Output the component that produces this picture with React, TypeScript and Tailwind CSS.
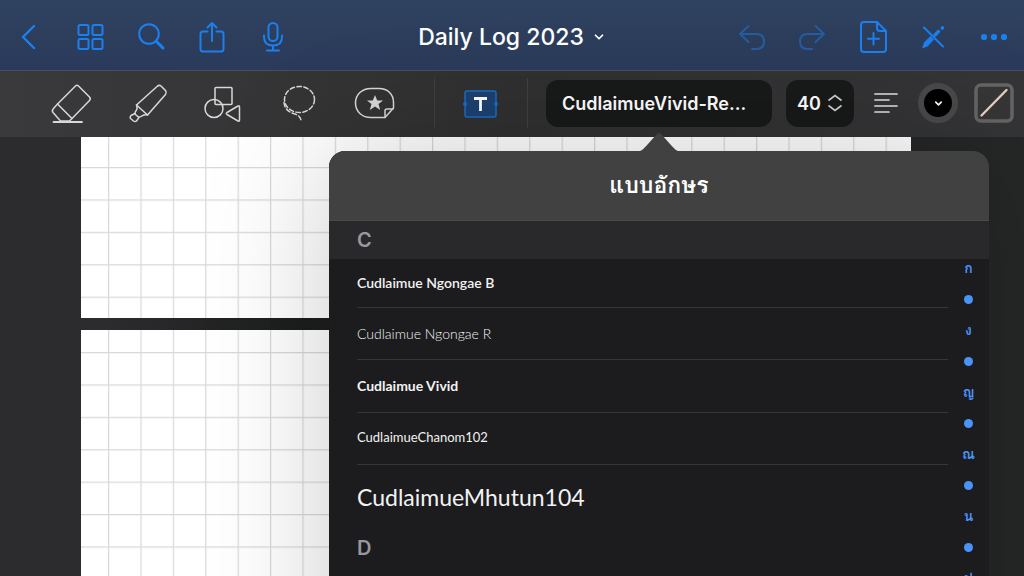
import React, { useState } from "react";
import { FiChevronDown } from "react-icons/fi";

interface IFontItem {
  id: number;
  name: string;
  className: string;
}

const fontList: IFontItem[] = [
  { id: 1, name: "Cudlaimue Ngongae B", className: "h-12 text-[14px] font-semibold" },
  { id: 2, name: "Cudlaimue Ngongae R", className: "h-[51px] text-[14px] font-light" },
  { id: 3, name: "Cudlaimue Vivid", className: "h-[52px] text-[14px] font-bold" },
  { id: 4, name: "CudlaimueChanom102", className: "h-[51px] text-[13px] font-normal" },
  { id: 5, name: "CudlaimueMhutun104", className: "h-[65px] text-[23px] font-normal" },
];

const indexList = ["ก", "•", "ง", "•", "ญ", "•", "ณ", "•", "น", "•", "ป"];

function HeaderButton({
  label,
  disabled,
  children,
}: {
  label: string;
  disabled?: boolean;
  children: React.ReactNode;
}) {
  return (
    <button
      aria-label={label}
      disabled={disabled}
      className="flex h-12 w-12 items-center justify-center text-[#1b80ee] disabled:text-[#255d9f]"
    >
      <svg
        width="32"
        height="34"
        viewBox="0 0 32 34"
        fill="none"
        stroke="currentColor"
        strokeWidth="2"
        strokeLinecap="round"
        strokeLinejoin="round"
      >
        {children}
      </svg>
    </button>
  );
}

function ToolButton({ label, children }: { label: string; children: React.ReactNode }) {
  return (
    <button aria-label={label} className="flex h-12 w-10 items-center justify-center text-[#d8d8d8]">
      <svg
        width="42"
        height="42"
        viewBox="0 0 42 42"
        fill="none"
        stroke="currentColor"
        strokeWidth="1.5"
        strokeLinecap="round"
        strokeLinejoin="round"
        className="shrink-0"
      >
        {children}
      </svg>
    </button>
  );
}

function Paper({ id, offsetY, className }: { id: string; offsetY: number; className: string }) {
  return (
    <div className={`bg-white ${className}`}>
      <svg width="100%" height="100%" className="block">
        <defs>
          <pattern id={id} x="27" y={offsetY} width="32.4" height="32.4" patternUnits="userSpaceOnUse">
            <path d="M0.6 0V32.4M0 0.6H32.4" stroke="#000" strokeOpacity="0.15" strokeWidth="1.2" />
          </pattern>
        </defs>
        <rect width="100%" height="100%" fill={`url(#${id})`} />
      </svg>
    </div>
  );
}

function FontPopover({ selected, onSelect }: { selected: number; onSelect: (id: number) => void }) {
  return (
    <div className="absolute top-[52px] left-1/2 z-10 w-[660px] -translate-x-1/2">
      <svg width="38" height="19" viewBox="0 0 38 19" className="mx-auto block">
        <path d="M0 19C3 18 5 15 8 12L16 3Q19 -1 22 3L30 12C33 15 35 18 38 19Z" fill="#414141" />
      </svg>
      <div className="h-screen overflow-hidden rounded-2xl bg-[#1c1c1e] shadow-[0_0_130px_rgba(0,0,0,0.2)]">
        <h2 className="flex h-[70px] items-center justify-center border-b border-[#4a4a4c] bg-[#414141] font-[Loma,'Noto_Sans_Thai',sans-serif] text-[23px] font-semibold text-white">
          แบบอักษร
        </h2>
        <h3 className="flex h-[38px] items-center bg-[#29292b] pl-7 text-[20px] font-semibold text-[#98989d]">
          C
        </h3>
        <div className="flex">
          <div className="flex-1 pl-7">
            <ul>
              {fontList.map((font) => (
                <li key={font.id} className="border-b border-[#363639] last:border-b-0">
                  <button
                    aria-pressed={font.id === selected}
                    onClick={() => onSelect(font.id)}
                    className={`flex w-full items-center font-[Lato,sans-serif] text-[#f2f2f2] ${font.className}`}
                  >
                    {font.name}
                  </button>
                </li>
              ))}
            </ul>
            <h3 className="flex h-9 items-center text-[20px] font-semibold text-[#98989d]">D</h3>
          </div>
          <nav
            className="-mt-1.5 flex w-[41px] flex-col items-center font-[Loma,'Noto_Sans_Thai',sans-serif]"
            aria-label="ดัชนี"
          >
            {indexList.map((letter, i) => (
              <a
                key={i}
                href="#"
                className="flex h-[31px] items-center justify-center text-[14px] font-semibold text-[#4a93f8]"
              >
                {letter === "•" ? <span className="h-[9px] w-[9px] rounded-full bg-[#4a93f8]" /> : letter}
              </a>
            ))}
          </nav>
        </div>
      </div>
    </div>
  );
}

export default function App() {
  const [selected, setSelected] = useState(3);

  return (
    <div className="flex h-screen flex-col overflow-hidden bg-[#2c2c2e] font-[Inter,'Noto_Sans_Thai',sans-serif]">
      <header className="flex h-[70px] items-center bg-linear-to-b from-[#2f435f] to-[#2b3a5b] px-[5px] pt-1">
        <div className="flex gap-[13px]">
          <HeaderButton label="Back">
            <path d="M21 6L10 17L21 28" strokeWidth="2.4" />
          </HeaderButton>
          <HeaderButton label="Pages">
            <rect x="4.5" y="5" width="10" height="10" rx="1.5" />
            <rect x="18.5" y="5" width="10" height="10" rx="1.5" />
            <rect x="4.5" y="19" width="10" height="10" rx="1.5" />
            <rect x="18.5" y="19" width="10" height="10" rx="1.5" />
          </HeaderButton>
          <HeaderButton label="Search">
            <circle cx="14" cy="14" r="9.8" />
            <path d="M21.5 21.5L28 28" strokeWidth="3" />
          </HeaderButton>
          <HeaderButton label="Share">
            <path d="M11.5 11.5H7Q4.5 11.5 4.5 14V29Q4.5 31.5 7 31.5H25Q27.5 31.5 27.5 29V14Q27.5 11.5 25 11.5H20.5" />
            <path d="M16 21V3M11.5 7.5L16 3L20.5 7.5" />
          </HeaderButton>
          <HeaderButton label="Record">
            <rect x="11.5" y="3" width="9" height="18" rx="4.5" />
            <path d="M7 15.5V17Q7 25.5 16 25.5Q25 25.5 25 17V15.5M16 25.5V30M10 30.5H22" />
          </HeaderButton>
        </div>
        <button className="flex flex-1 items-center justify-center gap-2 text-[23px] font-medium text-white">
          Daily Log 2023
          <FiChevronDown size={14} strokeWidth={3} />
        </button>
        <div className="flex gap-[13px]">
          <HeaderButton label="Undo" disabled>
            <path d="M13.5 6L5 14L13.5 22M5 14H21.5Q29 14 29 21.5Q29 29 21.5 29H17" />
          </HeaderButton>
          <HeaderButton label="Redo" disabled>
            <path d="M19.5 6L28 14L19.5 22M28 14H11.5Q4 14 4 21.5Q4 29 11.5 29H16" />
          </HeaderButton>
          <HeaderButton label="Add page">
            <path d="M7 2H20L29 11V29Q29 32 26 32H7Q4 32 4 29V5Q4 2 7 2ZM20 2V8Q20 11 23 11H29M16.5 13V24.5M11 18.7H22" />
          </HeaderButton>
          <HeaderButton label="Read only">
            <path d="M6 7.5L25 26.5" />
            <path d="M4 28.5L6 22.5L12.5 16L16 19.5L9.5 26.5Z" fill="currentColor" stroke="none" />
            <path d="M17 15L20.5 11.5M24.3 8L24.5 7.8" strokeWidth="3.4" />
          </HeaderButton>
          <HeaderButton label="More">
            <path d="M5 17H5.01M15 17H15.01M25 17H25.01" strokeWidth="6.2" />
          </HeaderButton>
        </div>
      </header>

      <div className="flex h-[67px] shrink-0 items-center border-t border-[#475063] bg-linear-to-r from-[#3a3a3c] via-[#303031] to-[#353537] pr-[10px] pb-0.5 pl-[51px]">
        <div className="flex gap-9">
          <ToolButton label="Eraser">
            <path d="M25.5 4Q27 2.5 28.500 4L39.5 15Q41 16.5 39.5 18.5L22 36.5L7.5 22Z" />
            <path d="M7.5 22L3.5 26.5Q1.5 28.5 3 30.5L10.5 39H19.5L22 36.5" />
            <path d="M3.5 40H32" strokeWidth="1.8" />
          </ToolButton>
          <ToolButton label="Highlighter">
            <path d="M31 4.5Q33 2.5 35 4L39.5 8.500Q41 10.5 39.5 12.5L21.5 33L10.5 23Z" />
            <path d="M10.5 23Q12 27 9.500 29.5Q8.5 31 9.500 32.5L12 34.8Q13.500 35.500 15 34.500Q18 32 21.5 33" />
            <path d="M9 31.500L5 33.5Q3.500 35 4.500 36.5L7.5 39Q9 40 10.5 39L13 35.3" />
          </ToolButton>
          <ToolButton label="Shapes">
            <rect x="13" y="5.5" width="17" height="17" rx="1" />
            <circle cx="12" cy="26.5" r="9" />
            <path d="M36 24Q37.5 23 37.5 25V38Q37.5 40 36 39L25 32.5Q23.5 31.5 25 30.5Z" />
          </ToolButton>
          <ToolButton label="Lasso">
            <g strokeDasharray="4.5 2.5">
              <ellipse cx="21.5" cy="17.5" rx="15" ry="13" />
              <path d="M6 20.5Q7 29.5 17 32Q22.5 34 23 38.5" />
            </g>
          </ToolButton>
          <ToolButton label="Stickers">
            <path d="M17 6.5H25C34 6.5 39.5 12.5 39.5 20.5V26L31 35.5H17C8 35.5 1.5 29.5 1.5 21C1.5 12.5 8 6.5 17 6.5Z" />
            <path d="M31 35.5V29Q31 27 33 27H39" />
            <path
              d="M21 13L23.2 18.5H29L24.5 22.1L26.2 28L21 24.5L15.8 28L17.5 22.1L13 18.5H18.8Z"
              fill="currentColor"
              stroke="none"
            />
          </ToolButton>
        </div>

        <div className="ml-auto flex items-center gap-7">
          <span className="h-[50px] w-px bg-[#414143]" />
          <button aria-label="Text" className="flex w-9 justify-center">
            <svg width="36" height="34" viewBox="0 0 36 34" className="shrink-0">
              <rect x="2" y="5" width="31" height="26" rx="2" fill="#1d4170" stroke="#1b6cc4" strokeWidth="1.5" />
              <circle cx="2" cy="18" r="2" fill="#1b6cc4" />
              <circle cx="33" cy="18" r="2" fill="#1b6cc4" />
              <path d="M11 12.5H24M17.5 12.5V25" fill="none" stroke="#fff" strokeWidth="2.8" />
            </svg>
          </button>
          <span className="h-[50px] w-px bg-[#414143]" />
        </div>

        <div className="ml-[18px] flex gap-3.5">
          <div className="relative">
            <button className="h-[47px] w-[226px] rounded-xl bg-[#181919] pr-6 pl-4 text-left text-[18px] font-semibold text-white">
              CudlaimueVivid-Re...
            </button>
            <FontPopover selected={selected} onSelect={setSelected} />
          </div>
          <button className="flex h-[47px] w-[68px] items-center justify-center gap-1.5 rounded-xl bg-[#181919] text-[18px] font-semibold text-white">
            40
            <svg width="16" height="18" viewBox="0 0 16 18" fill="none" stroke="#d0d0d0" strokeWidth="1.6">
              <path d="M1.5 6.5L8 1.5L14.5 6.5M1.5 11.5L8 16.5L14.5 11.5" />
            </svg>
          </button>
        </div>

        <div className="ml-4 flex items-center gap-4">
          <button aria-label="Alignment" className="flex w-8 justify-center">
            <svg width="24" height="22" viewBox="0 0 24 22" stroke="#e4e4e4" strokeWidth="1.7" strokeLinecap="round">
              <path d="M1 2H23M1 8H15M1 14H23M1 20H15" />
            </svg>
          </button>
          <button
            aria-label="Text color"
            className="flex h-10 w-10 items-center justify-center rounded-full border-6 border-[#49494b] bg-black text-white"
          >
            <FiChevronDown size={11} strokeWidth={3.5} />
          </button>
          <button aria-label="Background color" className="h-10 w-10">
            <svg width="40" height="40" viewBox="0 0 40 40">
              <rect x="2" y="2" width="36" height="36" rx="5" fill="#363637" stroke="#656566" strokeWidth="3.5" />
              <path d="M7.5 32.5L32.5 7" stroke="#e8cfc6" strokeWidth="2.4" strokeLinecap="round" />
            </svg>
          </button>
        </div>
      </div>

      <main className="flex flex-1 flex-col gap-3 overflow-hidden bg-linear-to-r from-[#2c2c2e] from-10% via-[#1c1d1d] via-30% to-[#262827] pr-[113px] pl-[81px]">
        <Paper id="grid-1" offsetY={30} className="h-[181px] shrink-0" />
        <Paper id="grid-2" offsetY={22} className="flex-1" />
      </main>
    </div>
  );
}
